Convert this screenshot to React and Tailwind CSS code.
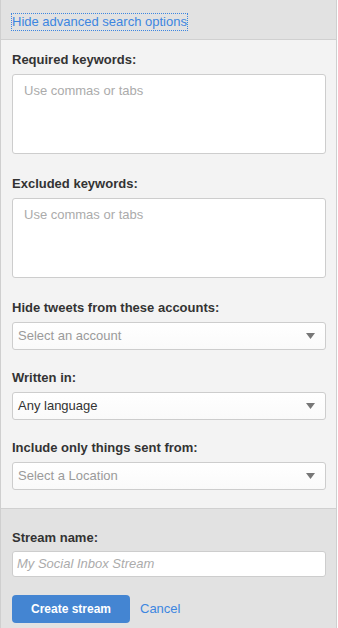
import React from "react";

function Label({ children }) {
  return (
    <div className="text-[13px] leading-[16px] font-bold text-[#333]">{children}</div>
  );
}

function Arrow() {
  return (
    <svg width="9" height="6" viewBox="0 0 9 6" className="shrink-0">
      <path d="M0 0 L9 0 L4.5 6 Z" fill="#777" />
    </svg>
  );
}

function Select({ text, muted }) {
  return (
    <div className="mt-[6px] h-[28px] flex items-center justify-between rounded-[3px] border border-[#cdcdcd] bg-gradient-to-b from-white to-[#fafafa] pl-[5px] pr-[10px]">
      <span className={"text-[13px] leading-[16px] " + (muted ? "text-[#9a9a9a]" : "text-[#333]")}>{text}</span>
      <Arrow />
    </div>
  );
}

function Area() {
  return (
    <div className="mt-[6px] h-[80px] rounded-[3px] border border-[#cdcdcd] bg-white px-[11px] pt-[8px] text-[13px] leading-[16px] text-[#ababab]">
      Use commas or tabs
    </div>
  );
}

export default function App() {
  return (
    <div
      className="w-[337px] h-[628px] border-x border-[#cfcfcf] bg-[#e2e2e2] overflow-hidden text-[13px] leading-[16px]"
      style={{ fontFamily: '"Liberation Sans", Arial, sans-serif' }}
    >
      <div className="h-[40px] border-b border-[#d0d0d0] pl-[11px] pt-[14px] text-[13px] leading-[16px]">
        <span className="inline-block text-[13px] leading-[16px] text-[#3d86e0] outline outline-1 outline-dotted outline-[#3d86e0]">
          Hide advanced search options
        </span>
      </div>
      <div className="bg-[#f3f3f3] border-b border-[#d0d0d0] pl-[11px] pr-[10px] pt-[12px] pb-[18px]">
        <Label>Required keywords:</Label>
        <Area />
        <div className="mt-[22px]">
          <Label>Excluded keywords:</Label>
        </div>
        <Area />
        <div className="mt-[22px]">
          <Label>Hide tweets from these accounts:</Label>
        </div>
        <Select text="Select an account" muted />
        <div className="mt-[20px]">
          <Label>Written in:</Label>
        </div>
        <Select text="Any language" />
        <div className="mt-[20px]">
          <Label>Include only things sent from:</Label>
        </div>
        <Select text="Select a Location" muted />
      </div>
      <div className="pl-[11px] pr-[10px] pt-[21px]">
        <Label>Stream name:</Label>
        <div className="mt-[5px] h-[26px] flex items-center rounded-[3px] border border-[#cdcdcd] bg-white pl-[4px]">
          <span className="text-[13px] leading-[16px] italic text-[#ababab]">My Social Inbox Stream</span>
        </div>
        <div className="mt-[18px] flex items-center">
          <div className="h-[28px] w-[118px] rounded-[4px] bg-[#4485d2] flex items-center justify-center text-white text-[12px] font-bold">
            Create stream
          </div>
          <span className="ml-[10px] text-[13px] text-[#3d86e0]">Cancel</span>
        </div>
      </div>
    </div>
  );
}
